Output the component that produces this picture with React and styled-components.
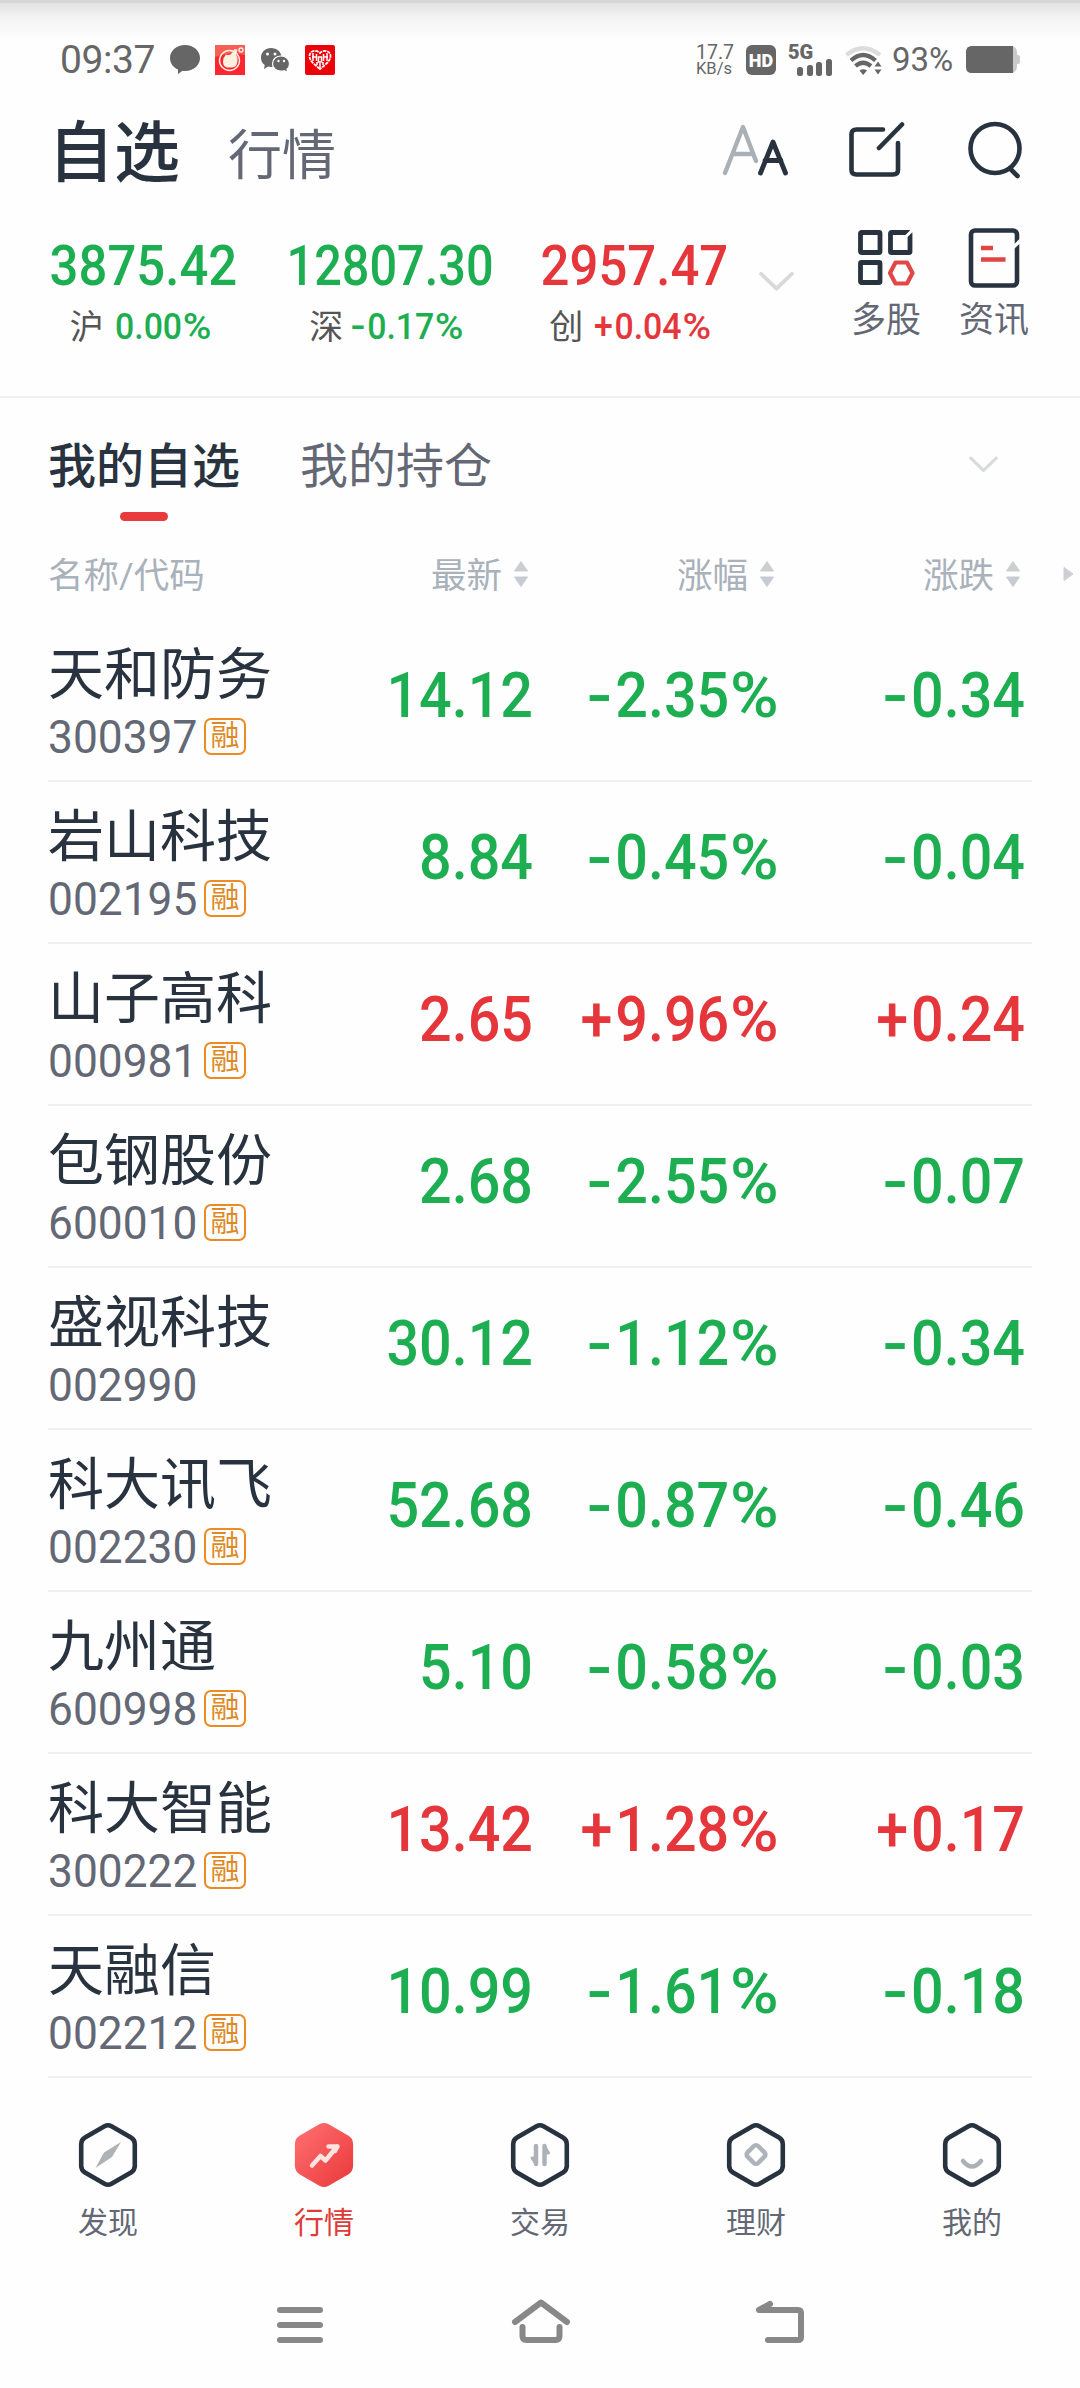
import styled, { createGlobalStyle } from "styled-components";

const GlobalStyle = createGlobalStyle`
  :root {
    --color-up: #e5363c;
    --color-down: #1eae52;
    --color-ink: #28333f;
    --color-grey: #636874;
    --color-muted: #a9b1bb;
    --color-line: #f0f0f1;
    --color-status: #666;
  }

  * {
    box-sizing: border-box;
  }

  body {
    margin: 0;
    background: #fefefe;
    font-family: Roboto, "Noto Sans CJK SC", sans-serif;
    color: var(--color-ink);
  }

  svg {
    display: block;
    flex-shrink: 0;
  }
`;

const Page = styled.div`
  width: 1080px;
  height: 2388px;
  overflow: hidden;
  display: flex;
  flex-direction: column;
`;

const StatusBar = styled.div`
  height: 90px;
  padding: 28px 60px 0 60px;
  display: flex;
  justify-content: space-between;
  align-items: center;
  color: var(--color-status);
  border-top: 3px solid #d6d6d6;
  background: linear-gradient(#e2e2e2, #f3f3f3 14px, #fefefe 36px);
`;

const StatusGroup = styled.div`
  display: flex;
  align-items: center;
  margin-top: -2px;
`;

const Clock = styled.span`
  width: 110px;
  font-size: 39px;
  line-height: 40px;
  letter-spacing: -0.4px;
`;

const Speed = styled.span`
  width: 50px;
  display: flex;
  flex-direction: column;
  font-size: 19.5px;
  line-height: 17px;

  span:last-child {
    font-size: 16.5px;
    line-height: 15px;
  }
`;

const HdBadge = styled.span`
  width: 30px;
  height: 30px;
  border-radius: 6px;
  background: var(--color-status);
  color: #fefefe;
  font-size: 18px;
  font-weight: 900;
  line-height: 31px;
  text-align: center;
`;

const Signal = styled.span`
  width: 57px;
  height: 30px;
  margin-left: 12px;
  position: relative;
  font-size: 20px;
  font-weight: 900;
  line-height: 15px;

  svg {
    position: absolute;
    left: 9px;
    top: 14px;
  }
`;

const Percent = styled.span`
  width: 74px;
  margin-left: 9px;
  font-size: 33px;
  line-height: 32px;
`;

const Header = styled.header`
  height: 120px;
  padding: 0 58px 0 48px;
  display: flex;
  align-items: center;
`;

const Title = styled.h1`
  margin: 8px 0 0;
  font-size: 66px;
  font-weight: 500;
  line-height: 80px;
`;

const SubTitle = styled.h2`
  margin: 14px auto 0 48px;
  font-size: 54px;
  font-weight: 400;
  line-height: 70px;
  color: var(--color-grey);
`;

const HeaderActions = styled.div`
  display: flex;
  align-items: center;
  gap: 60px;

  svg:last-child {
    margin-left: 3px;
  }
`;

const Indexes = styled.section`
  height: 188px;
  padding-left: 37px;
  display: flex;
  border-bottom: 2px solid var(--color-line);
`;

const IndexCard = styled.div`
  width: ${(props) => props.$width}px;
  padding-top: 30px;
  display: flex;
  flex-direction: column;
  align-items: center;
  color: var(--color-${(props) => props.$trend});
  font-weight: 500;
`;

const IndexValue = styled.span`
  font-size: 55px;
  line-height: 52px;
  transform: scaleX(${(props) => (props.$long ? 0.885 : 0.925)});
  white-space: nowrap;
`;

const IndexChange = styled.span`
  margin-top: 16px;
  display: flex;
  gap: 11px;
  font-size: 36px;
  line-height: 38px;
  white-space: nowrap;

  em {
    font-style: normal;
    font-weight: 400;
    font-size: 34px;
    color: #555;
  }
`;

const CompactAmount = styled.span`
  transform: scaleX(0.94);
  transform-origin: left;
`;

const IndexToggle = styled.div`
  width: 94px;
  padding: 61px 0 0 21px;
`;

const Shortcut = styled.div`
  width: 108px;
  padding-top: 18px;
  display: flex;
  flex-direction: column;
  align-items: center;
  font-size: 35px;
  line-height: 44px;
  color: var(--color-grey);

  svg {
    margin-bottom: 11px;
  }
`;

const Tabs = styled.nav`
  height: 134px;
  padding: 34px 82px 0 48px;
  display: flex;
  align-items: flex-start;
  gap: 60px;

  svg {
    margin: 24px 0 0 auto;
  }
`;

const Tab = styled.div`
  display: flex;
  flex-direction: column;
  align-items: center;
  font-size: 48px;
  line-height: 70px;
  font-weight: ${(props) => (props.$active ? 500 : 400)};
  color: ${(props) => (props.$active ? "var(--color-ink)" : "var(--color-grey)")};

  &::after {
    content: "";
    width: 48px;
    height: 9px;
    margin-top: 10px;
    border-radius: 5px;
    background: ${(props) => (props.$active ? "#e93b3d" : "transparent")};
  }
`;

const TableHead = styled.div`
  height: 88px;
  padding: 0 6px 8px 48px;
  display: grid;
  grid-template-columns: 235px 246px 246px 246px 1fr;
  align-items: center;
  font-size: 35.5px;
  color: var(--color-muted);
`;

const HeadCell = styled.span`
  display: flex;
  align-items: center;
  justify-content: ${(props) => (props.$first ? "flex-start" : "flex-end")};
  gap: 11px;
  white-space: nowrap;

  svg {
    margin-top: 3px;
  }
`;

const List = styled.main`
  margin: 0 48px;
`;

const Row = styled.div`
  height: 162px;
  display: grid;
  grid-template-columns: 237px 248px 246px 246px;
  border-bottom: 2px solid var(--color-line);
`;

const Name = styled.div`
  padding-top: 22px;
  font-size: 56px;
  line-height: 66px;
  white-space: nowrap;
`;

const Code = styled.div`
  display: flex;
  align-items: center;
  gap: 7px;
  height: 57px;
  line-height: 60px;
  font-size: 46px;
  color: var(--color-grey);

  span:first-child {
    width: 149px;
    transform: scaleX(0.963);
    transform-origin: left;
  }
`;

const MarginTag = styled.span`
  width: 42px;
  height: 37px;
  border: 2px solid #ec8a24;
  border-radius: 7px;
  color: #dd8a26;
  font-size: 29px;
  line-height: 33px;
  text-align: center;
`;

const Figure = styled.div`
  padding-top: 43px;
  font-size: 63.5px;
  font-weight: 500;
  line-height: 66px;
  text-align: right;
  white-space: nowrap;
  color: var(--color-${(props) => props.$trend});
  transform: scaleX(0.905);
  transform-origin: right;
`;

const Sign = styled.span`
  display: inline-block;
  margin-right: 0.05em;
  transform: scaleX(${(props) => (props.$minus ? 1.3 : 1)});
  transform-origin: right;
`;

const Unit = styled.span`
  display: inline-block;
  margin-left: 0.13em;
  transform: scaleX(1.15);
  transform-origin: right;
`;

const BottomNav = styled.nav`
  height: 186px;
  padding-top: 44px;
  display: grid;
  grid-template-columns: repeat(5, 1fr);
`;

const NavItem = styled.div`
  display: flex;
  flex-direction: column;
  align-items: center;
  gap: 13px;
  font-size: 30px;
  line-height: 44px;
  color: ${(props) => (props.$active ? "#dd3a3a" : "var(--color-grey)")};
`;

const SystemNav = styled.div`
  height: 124px;
  padding: 34px 274px 0 275px;
  display: flex;
  justify-content: space-between;
`;

const indexes = [
  { value: "3875.42", name: "沪", change: "0.00%", trend: "down", width: 213 },
  { value: "12807.30", name: "深", change: "-0.17%", trend: "down", width: 280 },
  { value: "2957.47", name: "创", change: "+0.04%", trend: "up", width: 208 },
];

const stocks = [
  { name: "天和防务", code: "300397", margin: true, price: "14.12", rate: "-2.35%", diff: "-0.34" },
  { name: "岩山科技", code: "002195", margin: true, price: "8.84", rate: "-0.45%", diff: "-0.04" },
  { name: "山子高科", code: "000981", margin: true, price: "2.65", rate: "+9.96%", diff: "+0.24" },
  { name: "包钢股份", code: "600010", margin: true, price: "2.68", rate: "-2.55%", diff: "-0.07" },
  { name: "盛视科技", code: "002990", margin: false, price: "30.12", rate: "-1.12%", diff: "-0.34" },
  { name: "科大讯飞", code: "002230", margin: true, price: "52.68", rate: "-0.87%", diff: "-0.46" },
  { name: "九州通", code: "600998", margin: true, price: "5.10", rate: "-0.58%", diff: "-0.03" },
  { name: "科大智能", code: "300222", margin: true, price: "13.42", rate: "+1.28%", diff: "+0.17" },
  { name: "天融信", code: "002212", margin: true, price: "10.99", rate: "-1.61%", diff: "-0.18" },
];

const navItems = [
  { label: "发现", icon: "compass" },
  { label: "行情", icon: "trend", active: true },
  { label: "交易", icon: "trade" },
  { label: "理财", icon: "wealth" },
  { label: "我的", icon: "mine" },
];

const navGlyphs = {
  compass: <path d="M43 20 34 35 17.500 46 26 30.500Z" fill="#adb2b7" />,
  trend: (
    <path d="M18 43.500 26.500 34l5 4.500L43 24.500M34.500 24.500H43.500L41 29" fill="none" stroke="#ffe3e1" strokeWidth="4.500" strokeLinecap="round" strokeLinejoin="round" />
  ),
  trade: (
    <g fill="#adb2b9" stroke="#adb2b9" strokeLinecap="round" strokeLinejoin="round">
      <path d="M26 24v18M34.500 24v18" strokeWidth="4.500" />
      <path d="M26 42l-4-6h4zM34.500 24l4 7h-4z" strokeWidth="3" />
    </g>
  ),
  wealth: (
    <rect x="22.500" y="25" width="15" height="15" rx="3" fill="none" stroke="#adb2bb" strokeWidth="4.500" transform="rotate(45 30 32.500)" />
  ),
  mine: <path d="M21 39q9 11 18 0" fill="none" stroke="#adb1b6" strokeWidth="4.500" strokeLinecap="round" />,
};

function HexIcon({ icon, active }) {
  return (
    <svg width="60" height="66" viewBox="0 0 60 66">
      <defs>
        <linearGradient id="hexFill" x1="0" y1="0" x2="1" y2="1">
          <stop offset="0" stopColor="#ff6f71" />
          <stop offset="1" stopColor="#ea3a3b" />
        </linearGradient>
      </defs>
      <path
        d="M26.500 4.300Q30 2.300 33.500 4.300L53 15.500Q56.800 17.800 56.800 22V44Q56.800 48 53 50.500L33.500 61.700Q30 63.700 26.500 61.700L7 50.500Q3.200 48 3.200 44V22Q3.200 17.800 7 15.500Z"
        fill={active ? "url(#hexFill)" : "none"}
        stroke={active ? "url(#hexFill)" : "#28333f"}
        strokeWidth="4.600"
      />
      {navGlyphs[icon]}
    </svg>
  );
}

function SortArrows() {
  return (
    <svg width="16" height="28" viewBox="0 0 16 28">
      <path d="M8 1.500 14.500 11h-13z" fill="#cccfd2" stroke="#cccfd2" strokeLinejoin="round" />
      <path d="M8 26.500 14.500 17h-13z" fill="#c7cbd3" stroke="#c7cbd3" strokeLinejoin="round" />
    </svg>
  );
}

function StatusIcons() {
  return (
    <svg width="166" height="32" viewBox="0 0 166 32">
      <path d="M15 1c8.500 0 15 5.800 15 13s-6.500 13-15 13q-1.500 0-2.500-.2L8 30v-4.500C3.200 23.500 0 19 0 14 0 6.800 6.500 1 15 1z" fill="#666" />

      <rect x="45" y="1" width="30" height="30" fill="#fb2630" />
      <path d="M45 1h30v10q-14-4-30 2z" fill="#f56052" />
      <circle cx="59.500" cy="16.500" r="10" fill="none" stroke="#fff0e6" strokeWidth="1.400" />
      <path d="M56 10.500q4 1.500 6-1.500l2.500-4 3 .5-1.500 5q2 2 1.500 6-.5 7-5.500 7h-5q-4-1-4-6 0-4 3-7z" fill="#fff0e0" />
      <circle cx="71" cy="6" r="2" fill="none" stroke="#fff0e6" strokeWidth="1.300" />

      <g fill="#666">
        <path d="M101 4c6 0 10.500 4 10.500 9.500S107 23 101 23q-1.500 0-3-.4L94 25l.7-4C92 19 91 16.500 91 13.500 91 8 95.500 4 101 4z" />
        <path d="M111 12c5 0 8.500 3.400 8.500 7.700 0 2.300-1 4.300-2.500 5.500l.6 3.300-3.500-1.800q-1.500.5-3.100.5c-5 0-8.500-3.300-8.500-7.500s3.500-7.700 8.500-7.700z" stroke="#fefefe" strokeWidth="1.200" />
      </g>
      <g fill="#fefefe">
        <circle cx="97.500" cy="10" r="1.500" />
        <circle cx="105" cy="10" r="1.500" />
        <circle cx="108.500" cy="17" r="1.200" />
        <circle cx="114" cy="17" r="1.200" />
      </g>

      <rect x="135" y="1" width="30" height="30" rx="2" fill="#ec0208" />
      <path d="M150 25C144 20 139.500 17 139.500 12c0-5 6.500-7 10.500-3 4-4 10.500-2 10.500 3 0 5-4.500 8-10.500 13z" fill="none" stroke="#fff" strokeWidth="1.800" strokeDasharray="3.500 .8" />
      <path d="M143 9v8M146.500 10v7M142 13h5M147 18v3M157 9v8M153.500 10v7M153 13h5M153 18v3M148.500 13v5h3v-5zM150 19v5" fill="none" stroke="#fff" strokeWidth="1.500" />
    </svg>
  );
}

function SignalBars() {
  return (
    <svg width="36" height="17" viewBox="0 0 36 17">
      <g fill="#666">
        <rect x="0" y="8" width="6" height="9" rx="2.500" />
        <rect x="10" y="6" width="6" height="11" rx="2.500" />
        <rect x="19" y="3" width="6" height="14" rx="2.500" />
        <rect x="29" y="0" width="6" height="17" rx="2.500" />
      </g>
    </svg>
  );
}

function WifiIcon() {
  return (
    <svg width="38" height="30" viewBox="0 0 38 30">
      <g fill="none" strokeWidth="4.200">
        <path d="M1.500 10Q18 -3.500 35 10" stroke="#dcdcdc" />
        <path d="M6 15.500Q18 4.500 30.500 15.500" stroke="#666" />
        <path d="M10.500 21Q18 14.500 26 21" stroke="#666" />
      </g>
      <path d="M14.500 25.500q3.800-2.500 7.500 0L18.200 30zM33 16.500l3.500 5h-7zM33 29.500l3.500-5h-7z" fill="#666" />
    </svg>
  );
}

function BatteryIcon() {
  return (
    <svg width="54" height="28" viewBox="0 0 54 28">
      <rect x="0" y="0" width="51" height="27" rx="6" fill="#c9c9c9" />
      <path d="M50 9h2q2 0 2 2v5q0 2-2 2h-2z" fill="#c9c9c9" />
      <path d="M6 0h41v27H6q-6 0-6-6V6q0-6 6-6z" fill="#666" />
    </svg>
  );
}

function FontSizeIcon() {
  return (
    <svg width="68" height="54" viewBox="0 0 68 54" fill="none" strokeWidth="4.400" strokeLinecap="round" strokeLinejoin="round">
      <path d="M4 50 22 4l13 34M12 31h20" stroke="#a9b1b6" />
      <path d="M39.500 50 52 19l12.500 31M44 37.500h16" stroke="#28333f" strokeWidth="4.800" />
    </svg>
  );
}

function EditIcon() {
  return (
    <svg width="56" height="56" viewBox="0 0 56 56" fill="none" stroke="#28333f" strokeWidth="4.600" strokeLinecap="round">
      <path d="M34 7.500H7.500Q2.500 7.500 2.500 12v36q0 4.500 5 4.500H44q5 0 5-4.500V21" />
      <path d="M30 26 53 2.500" />
    </svg>
  );
}

function SearchIcon() {
  return (
    <svg width="54" height="58" viewBox="0 0 54 58" fill="none" stroke="#28333f" strokeWidth="4.600" strokeLinecap="round">
      <circle cx="27" cy="27.500" r="24.500" />
      <path d="M42 47.500 49.500 55" />
    </svg>
  );
}

function MultiIcon() {
  return (
    <svg width="58" height="60" viewBox="0 0 58 60" fill="none" strokeWidth="4.800" strokeLinejoin="round">
      <g stroke="#28333f">
        <rect x="3.500" y="4.500" width="19.500" height="20" rx="1" />
        <rect x="33.500" y="4.500" width="19.500" height="20" rx="1" />
        <rect x="3.500" y="34.500" width="19.500" height="20" rx="1" />
      </g>
      <path d="M47 10.500 56 1.500" stroke="#fefefe" strokeWidth="3" />
      <path d="M38.500 34.500h11.500l5.500 10.500-5.500 10.500h-11.500L33 45z" stroke="#e04848" strokeWidth="4.200" />
    </svg>
  );
}

function NewsIcon() {
  return (
    <svg width="54" height="60" viewBox="0 0 54 60" fill="none">
      <rect x="4" y="2.500" width="46" height="55" rx="4" stroke="#28333f" strokeWidth="4.600" />
      <path d="M45.500 20 54 12" stroke="#fefefe" strokeWidth="3.500" />
      <path d="M14 20h12M14 31.500h24.500" stroke="#e04545" strokeWidth="4.600" />
    </svg>
  );
}

function Chevron({ width, height, color }) {
  return (
    <svg width={width} height={height} viewBox="0 0 34 20" fill="none">
      <path d="M2 2.500 17 17 32 2.500" stroke={color} strokeWidth="3.600" strokeLinecap="round" strokeLinejoin="round" />
    </svg>
  );
}

// Splits "-2.35%" into sign, digits and unit so each can be spaced on its own
function Amount({ value }) {
  const [, sign, digits, unit] = value.match(/^([+-]?)([\d.]+)(%?)$/);

  return (
    <span>
      {sign && <Sign $minus={sign === "-"}>{sign}</Sign>}
      {digits}
      {unit && <Unit>{unit}</Unit>}
    </span>
  );
}

function StockRow({ stock }) {
  const trend = stock.rate.startsWith("+") ? "up" : "down";

  return (
    <Row>
      <div>
        <Name>{stock.name}</Name>
        <Code>
          <span>{stock.code}</span>
          {stock.margin && <MarginTag>融</MarginTag>}
        </Code>
      </div>
      <Figure $trend={trend}>
        <Amount value={stock.price} />
      </Figure>
      <Figure $trend={trend}>
        <Amount value={stock.rate} />
      </Figure>
      <Figure $trend={trend}>
        <Amount value={stock.diff} />
      </Figure>
    </Row>
  );
}

function App() {
  return (
    <>
      <GlobalStyle />
      <Page>
        <StatusBar>
          <StatusGroup>
            <Clock>09:37</Clock>
            <StatusIcons />
          </StatusGroup>
          <StatusGroup>
            <Speed>
              <span>17.7</span>
              <span>KB/s</span>
            </Speed>
            <HdBadge>HD</HdBadge>
            <Signal>
              5G
              <SignalBars />
            </Signal>
            <WifiIcon />
            <Percent>93%</Percent>
            <BatteryIcon />
          </StatusGroup>
        </StatusBar>

        <Header>
          <Title>自选</Title>
          <SubTitle>行情</SubTitle>
          <HeaderActions>
            <FontSizeIcon />
            <EditIcon />
            <SearchIcon />
          </HeaderActions>
        </Header>

        <Indexes>
          {indexes.map((item) => (
            <IndexCard key={item.name} $trend={item.trend} $width={item.width}>
              <IndexValue $long={item.value.length > 7}>{item.value}</IndexValue>
              <IndexChange>
                <em>{item.name}</em>
                <CompactAmount>
                  <Amount value={item.change} />
                </CompactAmount>
              </IndexChange>
            </IndexCard>
          ))}
          <IndexToggle>
            <Chevron width={35} height={21} color="#d9d9d9" />
          </IndexToggle>
          <Shortcut>
            <MultiIcon />
            多股
          </Shortcut>
          <Shortcut>
            <NewsIcon />
            资讯
          </Shortcut>
        </Indexes>

        <Tabs>
          <Tab $active>我的自选</Tab>
          <Tab>我的持仓</Tab>
          <Chevron width={29} height={17} color="#d9dadd" />
        </Tabs>

        <TableHead>
          <HeadCell $first>名称/代码</HeadCell>
          <HeadCell>
            最新
            <SortArrows />
          </HeadCell>
          <HeadCell>
            涨幅
            <SortArrows />
          </HeadCell>
          <HeadCell>
            涨跌
            <SortArrows />
          </HeadCell>
          <HeadCell>
            <svg width="11" height="16" viewBox="0 0 11 16">
              <path d="M1 1.500 10 8 1 14.500z" fill="#cccfd4" stroke="#cccfd4" strokeLinejoin="round" />
            </svg>
          </HeadCell>
        </TableHead>

        <List>
          {stocks.map((stock) => (
            <StockRow key={stock.code} stock={stock} />
          ))}
        </List>

        <BottomNav>
          {navItems.map((item) => (
            <NavItem key={item.label} $active={item.active}>
              <HexIcon icon={item.icon} active={item.active} />
              {item.label}
            </NavItem>
          ))}
        </BottomNav>

        <SystemNav>
          <svg width="50" height="48" viewBox="0 0 50 48" stroke="#888" strokeWidth="6" strokeLinecap="round">
            <path d="M5 12h40M5 27h40M5 42h40" />
          </svg>
          <svg width="60" height="48" viewBox="0 0 60 48" fill="none" stroke="#888" strokeWidth="6" strokeLinecap="round" strokeLinejoin="round">
            <path d="M4 24 30 4.500 56 24M11.500 29v9q0 4 4 4h29q4 0 4-4v-9" />
          </svg>
          <svg width="50" height="48" viewBox="0 0 50 48" fill="none" stroke="#888" strokeWidth="6" strokeLinecap="round" strokeLinejoin="round">
            <path d="M14 6 3 12h39q3 0 3 3v24q0 3-3 3H12" />
          </svg>
        </SystemNav>
      </Page>
    </>
  );
}

export default App;
